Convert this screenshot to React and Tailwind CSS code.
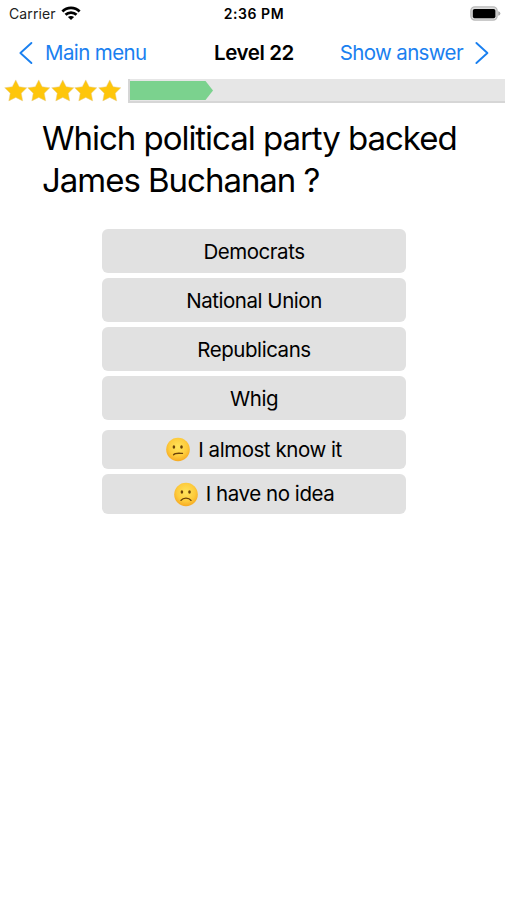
const answers = ["Democrats", "National Union", "Republicans", "Whig"];

function Wifi() {
  return (
    <svg width="20" height="16" viewBox="0 0 20 16" className="relative -top-px ml-[5px]" fill="none" stroke="#000" strokeWidth="2.8">
      <path d="M1.4 6.4C6.2 1.6 13.8 1.6 18.6 6.4" />
      <path d="M4.5 9.8C7.5 6.9 12.5 6.9 15.5 9.8" />
      <path d="M10 15L6.9 12C8.7 10.5 11.3 10.5 13.1 12Z" fill="#000" stroke="none" />
    </svg>
  );
}

function Battery() {
  return (
    <svg width="31" height="15" viewBox="0 0 31 15">
      <rect x="0.9" y="0.9" width="26.2" height="13.2" rx="4" fill="#ddd" stroke="#b9b9b9" strokeWidth="1.4" />
      <rect x="2.8" y="3" width="22.6" height="9.2" rx="1.8" fill="#000" />
      <path d="M28.2 5.2Q30.4 5.8 30.4 7.5T28.2 9.8Z" fill="#a9a9a9" />
    </svg>
  );
}

function Chevron({ right }) {
  return (
    <svg width="14" height="24" viewBox="0 0 14 24" fill="none" stroke="#1a80f0" strokeWidth="1.9" strokeLinecap="round" strokeLinejoin="round">
      <path d={right ? "M1.4 2L12.4 12L1.4 22" : "M12.4 2L1.4 12L12.4 22"} />
    </svg>
  );
}

function Star() {
  return (
    <svg width="23.5" height="24" viewBox="0 0 23.5 24">
      <path
        d="M11.75 0.9L15.2 7.7L22.8 8.8L17.3 14.2L18.7 21.9L11.75 18.4L4.8 21.9L6.2 14.2L0.7 8.8L8.3 7.7Z"
        fill="#fec60b"
        stroke="#e6cf94"
        strokeWidth="0.5"
        strokeLinejoin="round"
      />
    </svg>
  );
}

function Face({ sad }) {
  const id = sad ? "sad" : "unsure";
  return (
    <svg width="24" height="25" viewBox="0.5 0 24 25" className="mr-[8px]">
      <defs>
        <radialGradient id={id} cx="0.5" cy="0.4" r="0.64">
          <stop offset="0" stopColor="#ffe45c" />
          <stop offset="0.6" stopColor="#fdcb3c" />
          <stop offset="1" stopColor="#f5a31c" />
        </radialGradient>
      </defs>
      <circle cx="12.5" cy="12.5" r="11.8" fill={`url(#${id})`} />
      <ellipse cx="8.4" cy="10" rx="1.3" ry="1.7" fill="#6b4209" />
      <ellipse cx="16" cy="10" rx="1.3" ry="1.7" fill="#6b4209" />
      <path
        d={sad ? "M7.5 18.4C9.6 15.4 15.4 15.4 17.5 18.4" : "M8 17.8C9.6 15.6 13 16.2 17 16.4"}
        fill="none"
        stroke="#6b4209"
        strokeWidth="1.3"
        strokeLinecap="round"
      />
    </svg>
  );
}

export default function App() {
  return (
    <main className="flex h-[900px] w-[507px] flex-col overflow-hidden bg-white font-['Inter','Liberation_Sans',sans-serif] text-black">
      <header className="grid h-[27px] grid-cols-3 items-center pr-[6px] pl-[7px] text-[14px]">
        <div className="flex items-center pl-[2px] text-[#222]">
          <span className="tracking-[0.1px]">Carrier</span>
          <Wifi />
        </div>
        <span className="text-center font-semibold tracking-[0.55px]">2:36 PM</span>
        <div className="flex justify-end"><Battery /></div>
      </header>
      <nav className="grid h-[52px] grid-cols-[1fr_auto_1fr] items-center pr-[18px] pl-[19px] text-[20.5px] text-[#1a80f0]">
        <button className="flex items-center gap-3">
          <Chevron />
          <span className="tracking-[-0.6px]">Main menu</span>
        </button>
        <h1 className="font-semibold tracking-[-0.4px] text-black">Level 22</h1>
        <button className="flex items-center justify-end gap-3">
          <span className="tracking-[-0.63px]">Show answer</span>
          <Chevron right />
        </button>
      </nav>
      <section className="flex h-6 pl-[3.5px]">
        <div className="flex">
          {[1, 2, 3, 4, 5].map((n) => <Star key={n} />)}
        </div>
        <div className="mr-[2px] ml-[7px] flex-1 border-b-2 border-l-2 border-[#d6d6d6] bg-[#e6e6e6] pt-[2px]">
          <div className="h-[19px] w-[83px] bg-[#7bd28e] [clip-path:polygon(0_0,91%_0,100%_50%,91%_100%,0_100%)]" />
        </div>
      </section>
      <h2 className="mt-[14px] ml-[42px] text-[33px] leading-[42px] tracking-[-1.03px] whitespace-nowrap">
        Which political party backed<br />James Buchanan ?
      </h2>
      <section className="mt-[28px] ml-[102px] w-[304px] text-[20.5px] tracking-[-0.45px]">
        <div className="flex flex-col gap-[5px]">
          {answers.map((answer) => (
            <button key={answer} className="flex h-[44px] items-center justify-center rounded-[6px] bg-[#e1e1e1] pt-[2px]">{answer}</button>
          ))}
        </div>
        <div className="mt-[10px] flex flex-col gap-[5px]">
          <button className="flex h-[39px] items-center justify-center rounded-[6px] bg-[#e1e1e1]"><Face /><span className="pt-px">I almost know it</span></button>
          <button className="flex h-[40px] items-center justify-center rounded-[6px] bg-[#e1e1e1]"><Face sad /><span className="pt-px">I have no idea</span></button>
        </div>
      </section>
    </main>
  );
}
